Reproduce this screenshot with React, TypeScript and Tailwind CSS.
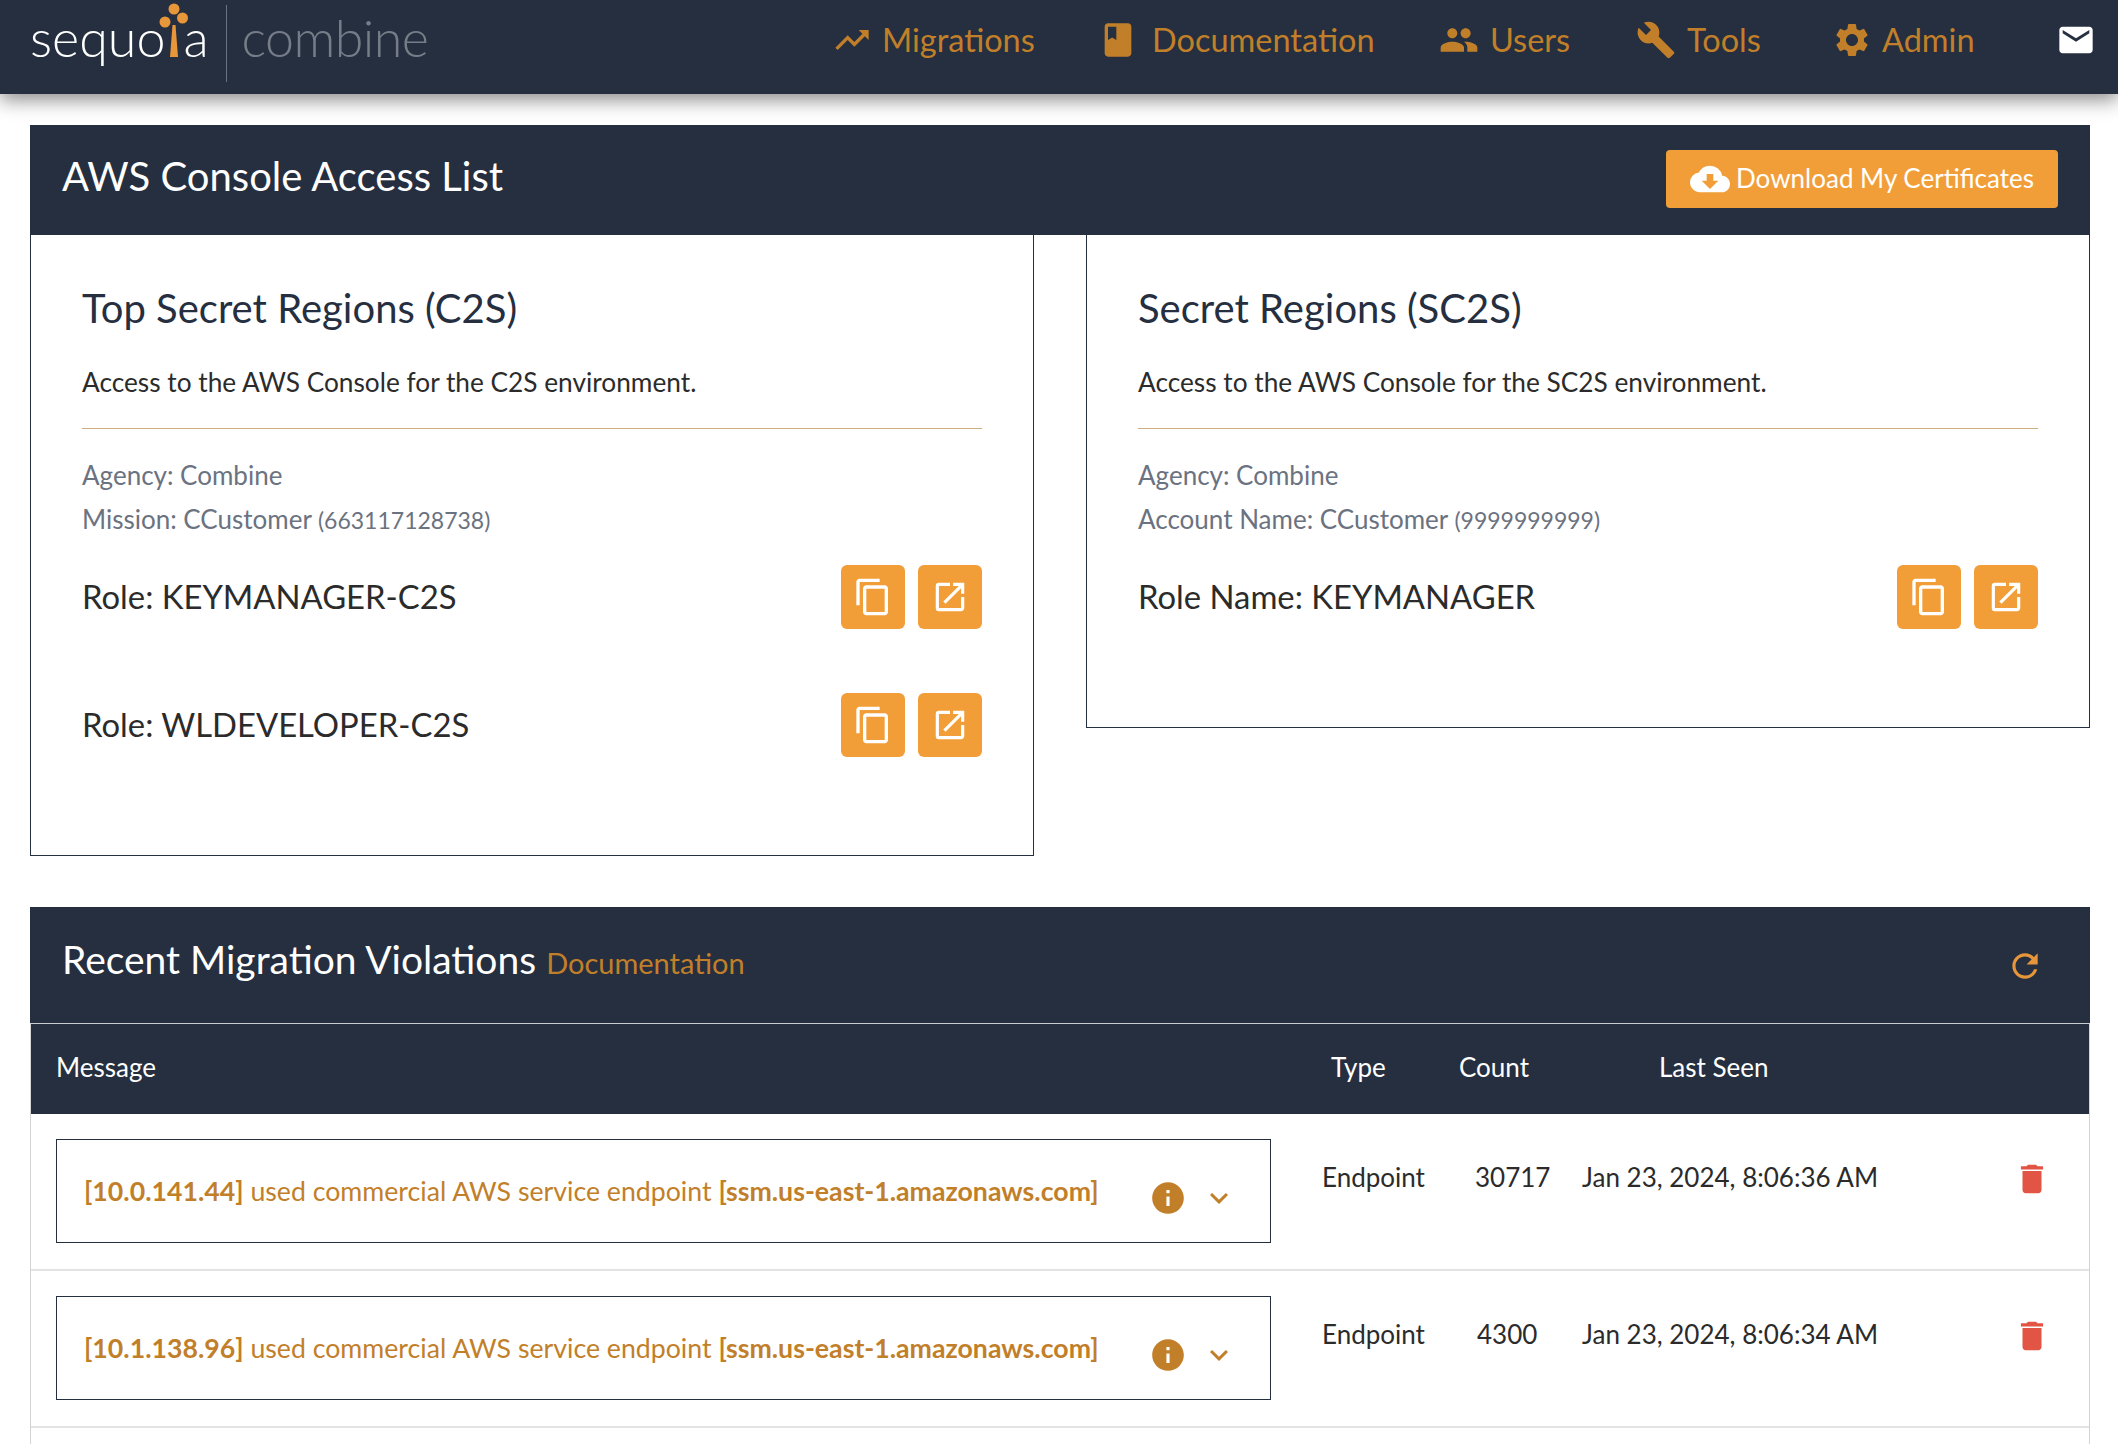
import { MdTrendingUp, MdBook, MdPeople, MdBuild, MdSettings, MdEmail, MdContentCopy, MdOpenInNew, MdCloudDownload, MdInfo, MdKeyboardArrowDown, MdDelete, MdRefresh } from "react-icons/md";

const nav = [
  { label: "Migrations", Icon: MdTrendingUp, cls: "w-[266px]", gap: "mr-[10px]" },
  { label: "Documentation", Icon: MdBook, cls: "w-[341px]", gap: "mr-[14px]" },
  { label: "Users", Icon: MdPeople, cls: "w-[197px]", gap: "mr-[11px]" },
  { label: "Tools", Icon: MdBuild, cls: "w-[196px]", gap: "mr-[11px]" },
  { label: "Admin", Icon: MdSettings, cls: "w-[224px]", gap: "mr-[10px]" },
];

function Action({ children }: { children: React.ReactNode }) {
  return (
    <button className="flex h-16 w-16 items-center justify-center rounded-[6px] bg-[#f29e38] text-white">{children}</button>
  );
}

function RoleRow({ label }: { label: string }) {
  return (
    <div className="mb-16 flex h-16 items-center justify-between">
      <span className="text-[32.8px] leading-none text-[#2b2b2b]">{label}</span>
      <div className="flex gap-[13px]">
        <Action><MdContentCopy size={40} /></Action>
        <Action><MdOpenInNew size={38} /></Action>
      </div>
    </div>
  );
}

function Card({ title, desc, lines, roles }: { title: string; desc: string; lines: [string, string]; roles: string[] }) {
  return (
    <div className="flex-1 border border-t-0 border-[#252f3f] px-[51px] pb-[34px]">
      <h2 className="mt-[50px] text-[40px] leading-[46px] text-[#252f3f]">{title}</h2>
      <p className="mt-[33px] text-[26.25px] leading-[36px] text-[#2b2b2b]">{desc}</p>
      <div className="mt-[28px] h-px bg-[#cfae7f]" />
      <div className="mt-[24px] text-[26px] leading-[44px] text-[#6b7280]">
        <div>Agency: Combine</div>
        <div>{lines[0]} <span className="text-[23px]">{lines[1]}</span></div>
      </div>
      <div className="mt-[23px]">
        {roles.map((r) => <RoleRow key={r} label={r} />)}
      </div>
    </div>
  );
}

const gridCols = "grid grid-cols-[1293px_121px_108px_1fr_100px]";

function Row({ ip, count, countPad, when }: { ip: string; count: string; countPad: string; when: string }) {
  return (
    <div className={`${gridCols} h-[157px] border-b-2 border-[#e3e3e3]`}>
      <div className="pl-[25px] pt-[25px]">
        <div className="flex h-[104px] w-[1215px] items-center border border-[#252f3f] pl-[27px] text-[26.7px] text-[#c27f2a]">
          <span className="w-[1066px] whitespace-nowrap"><b className="font-bold">{ip}</b> used commercial AWS service endpoint <b className="font-bold">[ssm.us-east-1.amazonaws.com]</b></span>
          <MdInfo size={38} className="mt-[14px] ml-[-1px]" />
          <MdKeyboardArrowDown size={36} className="ml-[14px] mt-[14px]" />
        </div>
      </div>
      <div className="ml-[-2px] pt-[41px] text-[26px] leading-[44px] text-[#2b2b2b]">Endpoint</div>
      <div className={`pt-[41px] text-[26px] leading-[44px] text-[#2b2b2b] ${countPad}`}>{count}</div>
      <div className="pl-[29px] pt-[41px] text-[26px] leading-[44px] text-[#2b2b2b] whitespace-nowrap">{when}</div>
      <div className="pt-[46px] pl-[24px] text-[#e25544]"><MdDelete size={38} /></div>
    </div>
  );
}

export default function App() {
  return (
    <div className="h-[1444px] w-full overflow-hidden bg-white font-['Lato','Liberation_Sans',sans-serif]">
      <header className="relative flex h-[94px] items-center bg-[#252f3f] pl-[30px] pr-[22px] shadow-[0_6px_18px_rgba(0,0,0,0.45)]">
        <div className="flex items-center pb-[7px]">
          <span className="mb-[13px] flex items-end text-[52px] font-light leading-none text-white">
            sequo
            <svg width="32" height="54" viewBox="0 0 32 54" className="mx-[-7px] mb-[6px] mt-[-8px]">
              <circle cx="16" cy="6" r="5.5" fill="#e8963a" />
              <circle cx="7" cy="19" r="5.5" fill="#e8963a" />
              <circle cx="24.5" cy="15" r="5.5" fill="#e8963a" />
              <polygon points="14.5,22 17.5,22 20,54 12,54" fill="#e8963a" />
            </svg>
            a
          </span>
          <div className="ml-[17px] h-[77px] w-px bg-[#6b7280]" />
          <span className="mb-[13px] ml-[15px] text-[52px] font-light leading-none tracking-[-0.6px] text-[#767d88]">combine</span>
        </div>
        <nav className="ml-auto flex items-center pb-[14px]">
          {nav.map(({ label, Icon, cls, gap }) => (
            <div key={label} className={`flex items-center text-[32.5px] text-[#c27f2a] ${cls}`}>
              <Icon size={40} className={`${gap} shrink-0`} />
              {label}
            </div>
          ))}
          <MdEmail size={40} className="text-white" />
        </nav>
      </header>

      <main className="px-[30px] pr-[28px] pt-[31px]">
        <section className="flex h-[110px] items-center justify-between bg-[#252f3f] pl-[32px] pr-[32px]">
          <h1 className="pb-[8px] text-[40px] text-white">AWS Console Access List</h1>
          <button className="mb-[2px] flex h-[58px] w-[392px] items-center justify-center gap-[6px] rounded-[4px] bg-[#f29e38] pb-[1px] text-[26px] text-white">
            <MdCloudDownload size={40} />
            Download My Certificates
          </button>
        </section>
        <div className="flex items-start gap-[52px]">
          <Card title="Top Secret Regions (C2S)" desc="Access to the AWS Console for the C2S environment." lines={["Mission: CCustomer", "(663117128738)"]} roles={["Role: KEYMANAGER-C2S", "Role: WLDEVELOPER-C2S"]} />
          <Card title="Secret Regions (SC2S)" desc="Access to the AWS Console for the SC2S environment." lines={["Account Name: CCustomer", "(9999999999)"]} roles={["Role Name: KEYMANAGER"]} />
        </div>

        <section className="mt-[51px]">
          <div className="flex h-[116px] items-center justify-between bg-[#252f3f] pl-[32px] pr-[46px]">
            <div className="flex items-baseline gap-[10px] pb-[12px]">
              <h2 className="text-[39px] text-white">Recent Migration Violations</h2>
              <a className="text-[29px] text-[#c27f2a]">Documentation</a>
            </div>
            <MdRefresh size={38} className="mt-[2px] text-[#e8963a]" />
          </div>
          <div className="border-x border-[#d4d4d4] pb-[60px]">
            <div className={`${gridCols} h-[91px] items-center border-t border-[#c9ccd1] bg-[#252f3f] pb-[4px] text-[26px] text-white`}>
              <div className="pl-[25px]">Message</div>
              <div className="pl-[7px]">Type</div>
              <div className="pl-[14px]">Count</div>
              <div className="pl-[106px]">Last Seen</div>
              <div />
            </div>
            <Row ip="[10.0.141.44]" count="30717" countPad="pl-[30px]" when="Jan 23, 2024, 8:06:36 AM" />
            <Row ip="[10.1.138.96]" count="4300" countPad="pl-[32px]" when="Jan 23, 2024, 8:06:34 AM" />
          </div>
        </section>
      </main>
    </div>
  );
}
